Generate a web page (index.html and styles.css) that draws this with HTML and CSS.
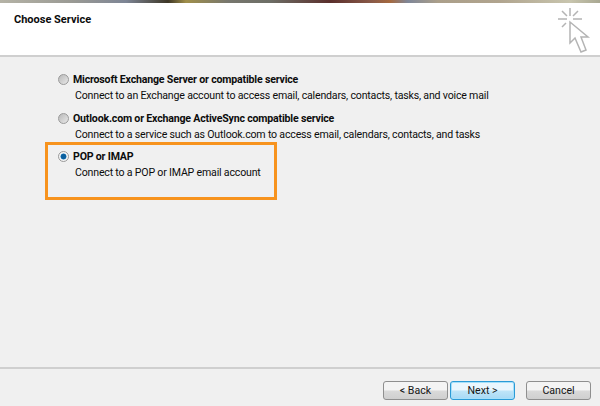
FILE: index.html
```html
<!DOCTYPE html>
<html lang="en">
<head>
<meta charset="utf-8">
<title>Choose Service</title>
<link rel="stylesheet" href="styles.css">
</head>
<body>
<div class="dialog">
  <div class="strip"></div>
  <header class="head">
    <h1 class="title">Choose Service</h1>
    <svg class="cursor" width="40" height="50" viewBox="0 0 40 50" fill="none" stroke="#b4b4b4">
      <path stroke-width="1.5" d="M17 3v8M9 6l5 5M25 6l-5 5M5 14h9M20 14h9M9 22l4-4"/>
      <path stroke-width="1.5" fill="#fff" d="M17 17V38l5-5 6 14 5-2-5-13h7z"/>
    </svg>
  </header>
  <main class="body">
    <label class="option">
      <span class="radio"></span>
      <span class="text"><b class="name">Microsoft Exchange Server or compatible service</b><span class="desc">Connect to an Exchange account to access email, calendars, contacts, tasks, and voice mail</span></span>
    </label>
    <label class="option">
      <span class="radio"></span>
      <span class="text"><b class="name">Outlook.com or Exchange ActiveSync compatible service</b><span class="desc">Connect to a service such as Outlook.com to access email, calendars, contacts, and tasks</span></span>
    </label>
    <label class="option">
      <span class="radio radio-on"></span>
      <span class="text"><b class="name">POP or IMAP</b><span class="desc">Connect to a POP or IMAP email account</span></span>
    </label>
    <div class="highlight"></div>
  </main>
  <footer class="foot">
    <button class="btn">&lt; Back</button>
    <button class="btn btn-default">Next &gt;</button>
    <button class="btn btn-cancel">Cancel</button>
  </footer>
</div>
</body>
</html>
```
FILE: styles.css
```css
* { box-sizing: border-box; }
html, body { margin: 0; height: 100%; }
body { font-family: Roboto, "Liberation Sans", sans-serif; font-size: 10.6px; letter-spacing: -0.19px; color: #0c0c0c; background: #f0f0f0; }
.dialog { width: 600px; height: 406px; display: flex; flex-direction: column; }
.strip { height: 3px; background: linear-gradient(90deg, #b5b3a6 0%, #9a9a94 12%, #7d8595 21%, #3d3626 28%, #a08f4a 31%, #77776e 38%, #6d6e66 45%, #5a2f2c 55%, #8a5a48 62%, #a5693f 65%, #7f8798 68%, #ab9f8a 73%, #b0a48e 83%, #c8c5ae 95%, #a9a892 100%); }
.head { height: 54px; background: #fff; border-bottom: 2px solid #cfcfcf; padding: 9px 0 0 14px; display: flex; justify-content: space-between; align-items: flex-start; }
.title { margin: 0; font-size: 11px; font-weight: 700; line-height: 15px; letter-spacing: 0; color: #0c0c0c; }
.cursor { margin: -7px 7px 0 0; }
.body { flex: 1; position: relative; padding: 15px 0 0 58px; display: flex; flex-direction: column; gap: 7.5px; }
.option { display: flex; gap: 4px; }
.radio { width: 11px; height: 11px; margin-top: 2px; border-radius: 50%; border: 1px solid #9a9a9a; background: linear-gradient(135deg, #b9b9b9, #e8e8e8); flex: none; }
.radio-on { background: radial-gradient(circle, #0a5f9e 0 2.2px, #3a8cc5 2.8px, #f4f4f4 3.3px); }
.text { display: flex; flex-direction: column; gap: 1px; }
.name { line-height: 15px; font-weight: 700; }
.desc { line-height: 15px; padding-left: 2px; }
.highlight { position: absolute; left: 45px; top: 85px; width: 232px; height: 58px; border: 3px solid #f7931e; }
.foot { height: 39px; border-top: 2px solid #cfcfcf; display: flex; padding: 12px 0 0 383px; }
.btn { width: 65px; height: 19px; padding: 0; font: 10.6px Roboto, "Liberation Sans", sans-serif; color: #151515; border: 1px solid #8f8f8f; border-radius: 3px; background: linear-gradient(#f4f4f4 0 45%, #d9d9d9 55%, #cfcfcf); }
.btn-default { border: 1px solid #2a9ad6; margin-left: 2px; background: linear-gradient(#eaf6fd 0 45%, #bde4f8 55%, #a7d9f5); box-shadow: inset 0 0 0 1px #a6e0fa; }
.btn-cancel { margin-left: 11px; }
```
